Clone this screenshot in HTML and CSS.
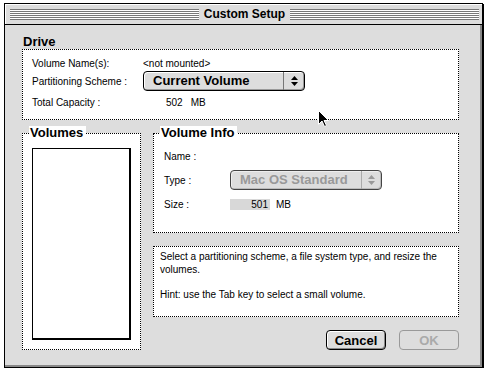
FILE: index.html
```html
<!DOCTYPE html>
<html lang="en">
<head>
    <meta charset="UTF-8">
    <title>Custom Setup</title>
    <link rel="stylesheet" href="styles.css">
</head>
<body>
    <div class="window">
        <div class="titlebar">
            <div class="stripes"></div>
            <div class="title">Custom Setup</div>
            <div class="stripes"></div>
        </div>
        <div class="content">
            <div class="group-label">Drive</div>
            <div class="drive-box">
                <div class="row r1">
                    <span class="label">Volume Name(s):</span>
                    <span>&lt;not mounted&gt;</span>
                </div>
                <div class="row r2">
                    <span class="label">Partitioning Scheme :</span>
                    <div class="popup scheme">
                        <span class="value">Current Volume</span>
                        <span class="arrows">
                            <svg width="7" height="10" viewBox="0 0 7 10"><path d="M3.5 0L7 4H0Z M0 6H7L3.5 10Z" fill="#000"/></svg>
                        </span>
                    </div>
                </div>
                <div class="row r3">
                    <span class="label">Total Capacity :</span>
                    <span class="capacity">502</span>
                    <span class="unit">MB</span>
                </div>
            </div>

            <div class="lower">
                <fieldset class="volumes">
                    <legend>Volumes</legend>
                    <div class="list"></div>
                </fieldset>

                <div class="right">
                    <fieldset class="info">
                        <legend>Volume Info</legend>
                        <div class="info-grid">
                            <span>Name :</span>
                            <span></span>
                            <span>Type :</span>
                            <div class="popup type disabled">
                                <span class="value">Mac OS Standard</span>
                                <span class="arrows">
                                    <svg width="7" height="10" viewBox="0 0 7 10"><path d="M3.5 0L7 4H0Z M0 6H7L3.5 10Z" fill="#999"/></svg>
                                </span>
                            </div>
                            <span>Size :</span>
                            <div class="size">
                                <span class="size-field">501</span>
                                <span class="unit">MB</span>
                            </div>
                        </div>
                    </fieldset>

                    <div class="help">
                        <p>Select a partitioning scheme, a file system type, and resize the volumes.</p>
                        <p class="hint">Hint: use the Tab key to select a small volume.</p>
                    </div>

                    <div class="buttons">
                        <button class="btn">Cancel</button>
                        <button class="btn disabled">OK</button>
                    </div>
                </div>
            </div>
        </div>

        <!-- mouse pointer from the screenshot -->
        <svg class="cursor" width="12" height="18" viewBox="0 0 12 18">
            <path d="M0.5 0.5V14.5L4 11L6.5 16.5L8.5 15.5L6 10.5H10.5Z" fill="#000" stroke="#fff" stroke-width="1"/>
        </svg>
    </div>
</body>
</html>
```

FILE: styles.css
```css
* {
    box-sizing: border-box;
}
body {
    margin: 0;
    background: #fff;
    font-family: "Liberation Sans", Arial, sans-serif;
    font-size: 10px;
    color: #000;
}
.window {
    position: relative;
    width: 479px;
    margin: 3px 0 0 4px;
    border: 1px solid #000;
    background: #dddddd;
    box-shadow: 1px 1px 0 #000;
}
.titlebar {
    display: flex;
    align-items: center;
    height: 21px;
    padding: 0 3px 0 5px;
    border-bottom: 1px solid #000;
    background: #dddddd;
    box-shadow: inset 1px 1px #fff;
}
.stripes {
    flex: 1;
    height: 11px;
    background: repeating-linear-gradient(to bottom, #777 0 1px, #fff 1px 2px);
}
.title {
    font-weight: bold;
    font-size: 12px;
    padding: 0 5px 0 5px;
}
.content {
    padding: 9px 0 15px 17px;
    border-right: 2px solid #888;
    border-bottom: 2px solid #888;
}
.group-label {
    font-weight: bold;
    font-size: 13px;
    line-height: 15px;
    padding-left: 1px;
}
.drive-box {
    width: 437px;
    height: 71px;
    padding: 6px 0 0 9px;
    border: 1px dotted #000;
    background: #fff;
}
.row {
    display: flex;
    align-items: center;
}
.r1 {
    height: 14px;
}
.r2 {
    height: 20px;
    margin-top: 1px;
}
.r3 {
    height: 14px;
    margin-top: 4px;
}
.label {
    width: 111px;
}
.capacity {
    margin-left: 23px;
}
.unit {
    margin-left: 8px;
}
.popup {
    display: flex;
    height: 20px;
    border: 1px solid #000;
    border-radius: 4px;
    background: #dddddd;
    box-shadow: inset 1px 1px #fff, inset -1px -1px #999;
    font-weight: bold;
    font-size: 13px;
}
.popup .value {
    flex: 1;
    padding-left: 9px;
    line-height: 18px;
}
.popup .arrows {
    display: flex;
    align-items: center;
    justify-content: center;
    width: 21px;
    border-left: 1px solid #777;
}
.scheme {
    width: 162px;
}
.type {
    width: 152px;
}
.popup.disabled {
    border-color: #444;
    color: #999;
    box-shadow: inset 1px 1px #eee, inset -1px -1px #bbb;
}
.popup.disabled .arrows {
    width: 20px;
    border-left-color: #aaa;
}
.lower {
    display: flex;
    gap: 12px;
    margin-top: 6px;
}
fieldset {
    margin: 0;
    padding: 0;
    min-width: 0;
    border: 1px dotted #000;
    background: #fff;
}
legend {
    margin-left: 6px;
    padding: 0 3px 0 1px;
    background: #fff;
    font-weight: bold;
    font-size: 13px;
    line-height: 14px;
}
.volumes {
    display: flex;
    flex-direction: column;
    width: 119px;
    padding-top: 8px;
    padding-bottom: 9px;
}
.list {
    flex: 1;
    margin: 0 9px;
    background: #fff;
    border: 1px solid #000;
    border-right-width: 2px;
    border-bottom-width: 2px;
}
.right {
    display: flex;
    flex-direction: column;
    width: 306px;
}
.info {
    padding-top: 9px;
    padding-bottom: 21px;
}
.info-grid {
    display: grid;
    grid-template-columns: 66px auto;
    grid-template-rows: 14px 20px 14px;
    row-gap: 7px;
    align-items: center;
    padding-left: 10px;
}
.size {
    display: flex;
    align-items: center;
}
.size-field {
    width: 40px;
    height: 11px;
    padding-right: 2px;
    line-height: 11px;
    text-align: right;
    background: #d8d8d8;
}
.size .unit {
    margin-left: 6px;
}
.help {
    margin-top: 13px;
    padding: 3px 4px 15px 6px;
    border: 1px dotted #000;
    background: #fff;
    line-height: 13px;
}
.help p {
    margin: 0;
}
.help .hint {
    margin-top: 12px;
}
.buttons {
    display: flex;
    justify-content: flex-end;
    gap: 13px;
    margin-top: 13px;
}
.btn {
    width: 60px;
    height: 20px;
    padding: 0;
    border: 1px solid #000;
    border-radius: 4px;
    background: #dddddd;
    box-shadow: inset 1px 1px #fff, inset -1px -1px #888;
    font-family: "Liberation Sans", Arial, sans-serif;
    font-weight: bold;
    font-size: 13px;
    color: #000;
}
.btn.disabled {
    border-color: #999;
    color: #aaa;
    box-shadow: none;
}
.cursor {
    position: absolute;
    left: 313px;
    top: 106px;
}
```
